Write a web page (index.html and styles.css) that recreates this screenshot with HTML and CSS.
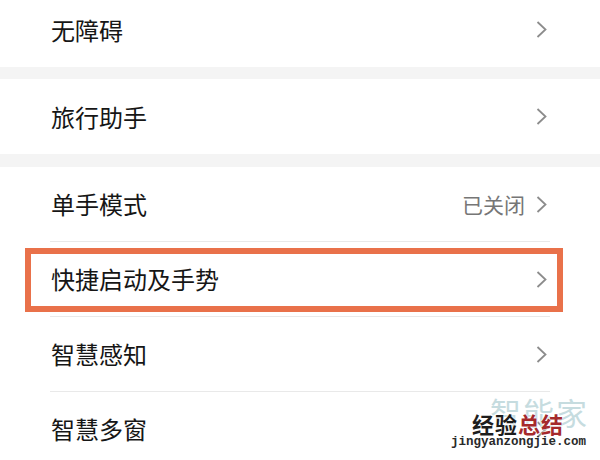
FILE: index.html
```html
<!DOCTYPE html>
<html lang="zh-CN">
<head>
<meta charset="utf-8">
<title>设置</title>
<link rel="stylesheet" href="styles.css">
</head>
<body>
<div class="page">
  <section class="group first">
    <div class="row"><div class="cell"><span class="label">无障碍</span><span class="right"><svg class="chev" viewBox="0 0 11 18"><path d="M1.5 1.5 L9.5 9 L1.5 16.5"/></svg></span></div></div>
  </section>
  <div class="band"></div>
  <section class="group">
    <div class="row"><div class="cell"><span class="label">旅行助手</span><span class="right"><svg class="chev" viewBox="0 0 11 18"><path d="M1.5 1.5 L9.5 9 L1.5 16.5"/></svg></span></div></div>
  </section>
  <div class="band b2"></div>
  <section class="group">
    <div class="row lined"><div class="cell"><span class="label">单手模式</span><span class="right"><span class="value">已关闭</span><svg class="chev" viewBox="0 0 11 18"><path d="M1.5 1.5 L9.5 9 L1.5 16.5"/></svg></span></div></div>
    <div class="row lined marked"><div class="cell"><span class="label">快捷启动及手势</span><span class="right"><svg class="chev" viewBox="0 0 11 18"><path d="M1.5 1.5 L9.5 9 L1.5 16.5"/></svg></span></div><div class="highlight"></div></div>
    <div class="row lined"><div class="cell"><span class="label">智慧感知</span><span class="right"><svg class="chev" viewBox="0 0 11 18"><path d="M1.5 1.5 L9.5 9 L1.5 16.5"/></svg></span></div></div>
    <div class="row lined"><div class="cell"><span class="label">智慧多窗</span><span class="right"><svg class="chev" viewBox="0 0 11 18"><path d="M1.5 1.5 L9.5 9 L1.5 16.5"/></svg></span></div></div>
  </section>
</div>
<div class="watermark">
  <div class="wm-back">智能家</div>
  <div class="wm-main"><span class="wm-black">经验</span><span class="wm-red">总结</span></div>
  <div class="wm-url">jingyanzongjie.com</div>
</div>
</body>
</html>
```
FILE: styles.css
```css
html, body {
  margin: 0;
  padding: 0;
  background: #ffffff;
  width: 600px;
  height: 460px;
  overflow: hidden;
  font-family: "Noto Sans CJK SC", "Noto Sans", sans-serif;
}
.page {
  display: flex;
  flex-direction: column;
}
.group.first {
  margin-top: -8px;
}
.band {
  height: 12px;
  background: #f4f4f4;
}
.band.b2 {
  height: 13px;
}
.row {
  height: 75px;
  padding: 0 50px;
  position: relative;
}
.cell {
  height: 100%;
  box-sizing: border-box;
  display: flex;
  align-items: center;
  justify-content: space-between;
  padding: 0 3px 0 1px;
}
.row.lined .cell {
  border-bottom: 1px solid #e9e9e9;
}
.label {
  font-size: 24px;
  color: #161616;
  line-height: 1;
}
.right {
  display: flex;
  align-items: center;
  gap: 11px;
}
.value {
  font-size: 21px;
  color: #767676;
  line-height: 1;
}
.chev {
  width: 11px;
  height: 19px;
  fill: none;
  stroke: #8c8c8c;
  stroke-width: 1.8;
}
.highlight {
  position: absolute;
  left: 25px;
  right: 37px;
  top: 6px;
  bottom: 5px;
  border: 6px solid #e9714a;
}
.watermark {
  position: absolute;
  right: 12px;
  bottom: 10px;
  width: 122px;
  height: 64px;
}
.wm-back {
  position: absolute;
  left: 24px;
  top: 10px;
  font-size: 31px;
  color: #c6dcdf;
  letter-spacing: 2px;
  line-height: 1;
  white-space: nowrap;
}
.wm-main {
  position: absolute;
  left: 6px;
  top: 26px;
  font-size: 22px;
  font-weight: bold;
  line-height: 1;
  white-space: nowrap;
  letter-spacing: 1px;
  text-shadow: 0 0 2px #ffffff, 0 0 2px #ffffff;
}
.wm-black { color: #1d1d1d; }
.wm-red { color: #a52a2c; }
.wm-url {
  position: absolute;
  left: -15px;
  top: 50px;
  font-family: "Liberation Mono", monospace;
  font-size: 12.5px;
  font-weight: bold;
  color: #2a2a2a;
  line-height: 1;
  white-space: nowrap;
}
```
